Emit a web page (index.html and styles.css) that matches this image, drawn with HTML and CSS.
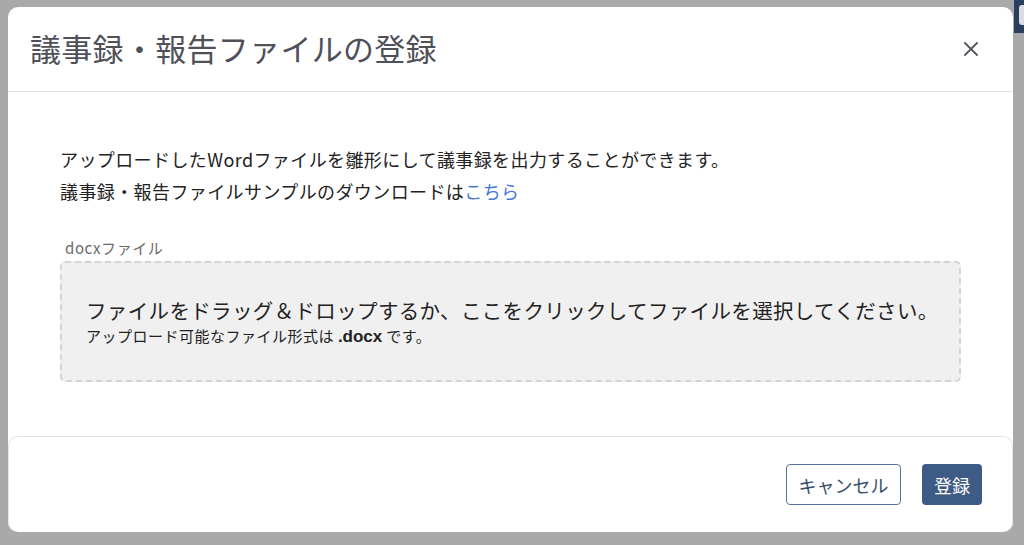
FILE: index.html
```html
<!DOCTYPE html>
<html lang="ja">
<head>
<meta charset="utf-8">
<title>議事録・報告ファイルの登録</title>
<link rel="stylesheet" href="styles.css">
</head>
<body>
<div class="app-tab"><span class="app-tab-inner"></span></div>
<div class="modal">
  <div class="modal-header">
    <h1 class="modal-title">議事録・報告ファイルの登録</h1>
    <button class="close-btn" aria-label="閉じる">
      <svg width="14" height="14" viewBox="0 0 14 14"><path d="M1 1L13 13M13 1L1 13" stroke="#55565e" stroke-width="1.8" stroke-linecap="round"/></svg>
    </button>
  </div>
  <div class="modal-body">
    <p class="desc">アップロードしたWordファイルを雛形にして議事録を出力することができます。</p>
    <p class="desc">議事録・報告ファイルサンプルのダウンロードは<a class="link" href="#">こちら</a></p>
    <div class="field-label">docxファイル</div>
    <div class="dropzone">
      <div class="drop-main">ファイルをドラッグ＆ドロップするか、ここをクリックしてファイルを選択してください。</div>
      <div class="drop-sub">アップロード可能なファイル形式は <b>.docx</b> です。</div>
    </div>
  </div>
  <div class="modal-footer">
    <button class="btn btn-outline">キャンセル</button>
    <button class="btn btn-primary">登録</button>
  </div>
</div>
</body>
</html>
```
FILE: styles.css
```css
html, body {
  margin: 0;
  padding: 0;
}
body {
  background: #a9a9a9;
  width: 1024px;
  height: 545px;
  overflow: hidden;
  position: relative;
  font-family: "Noto Sans CJK JP", "Noto Sans", sans-serif;
  color: #222;
}
.app-tab {
  position: absolute;
  left: 1014px;
  top: 0;
  width: 10px;
  height: 33px;
  background: #2a3f5e;
}
.app-tab-inner {
  position: absolute;
  left: 5px;
  top: 5px;
  width: 12px;
  height: 20px;
  background: #d9dde3;
  border-radius: 3px;
}
.modal {
  position: relative;
  margin: 7px 0 0 8px;
  width: 1005px;
  height: 525px;
  background: #fff;
  border-radius: 10px;
  display: flex;
  flex-direction: column;
  box-sizing: border-box;
}
.modal-header {
  height: 85px;
  box-sizing: border-box;
  border-bottom: 1px solid #e2e2e2;
  display: flex;
  align-items: center;
  justify-content: space-between;
  padding: 0 35px 0 22px;
}
.modal-title {
  margin: 0;
  font-size: 31px;
  font-weight: 400;
  color: #4f5058;
  line-height: 40px;
  letter-spacing: 0.3px;
  padding-bottom: 2px;
}
.close-btn {
  background: none;
  border: 0;
  padding: 0;
  width: 14px;
  height: 14px;
  display: flex;
  cursor: pointer;
}
.modal-body {
  flex: 1;
  padding: 51px 52px 0 52px;
}
.desc {
  margin: 0;
  font-size: 18px;
  line-height: 32px;
  letter-spacing: 0.4px;
  color: #222;
}
.link {
  color: #4a78d6;
  text-decoration: none;
}
.field-label {
  margin: 31px 0 3px 5px;
  font-size: 15px;
  line-height: 20px;
  letter-spacing: 0.6px;
  color: #6a6a6a;
}
.dropzone {
  height: 121px;
  box-sizing: border-box;
  background: #f0f0f0;
  border: 2px dashed #d4d4d4;
  border-radius: 5px;
  padding: 0 0 0 24px;
  display: flex;
  flex-direction: column;
  justify-content: center;
}
.drop-main {
  font-size: 20.5px;
  line-height: 28px;
  letter-spacing: 0.35px;
  color: #222;
  padding-top: 2px;
}
.drop-sub {
  font-size: 15px;
  line-height: 24px;
  letter-spacing: 0.5px;
  color: #222;
}
.drop-sub b {
  font-family: "Liberation Sans", "Noto Sans", sans-serif;
  font-weight: 700;
  font-size: 17px;
  letter-spacing: 0;
}
.modal-footer {
  height: 96px;
  box-sizing: border-box;
  border: 1px solid #e4e4e4;
  border-bottom: 0;
  border-radius: 10px;
  display: flex;
  align-items: center;
  justify-content: flex-end;
  gap: 21px;
  padding: 0 30px 0 0;
}
.btn {
  height: 41px;
  box-sizing: border-box;
  font-family: "Noto Sans CJK JP", sans-serif;
  font-size: 18px;
  border-radius: 4px;
  cursor: pointer;
  line-height: 1;
}
.btn-outline {
  width: 115px;
  background: #fff;
  color: #3a4f6c;
  border: 1.5px solid #5674a0;
}
.btn-primary {
  width: 60px;
  background: #3d5b84;
  color: #fff;
  border: 0;
}
```
